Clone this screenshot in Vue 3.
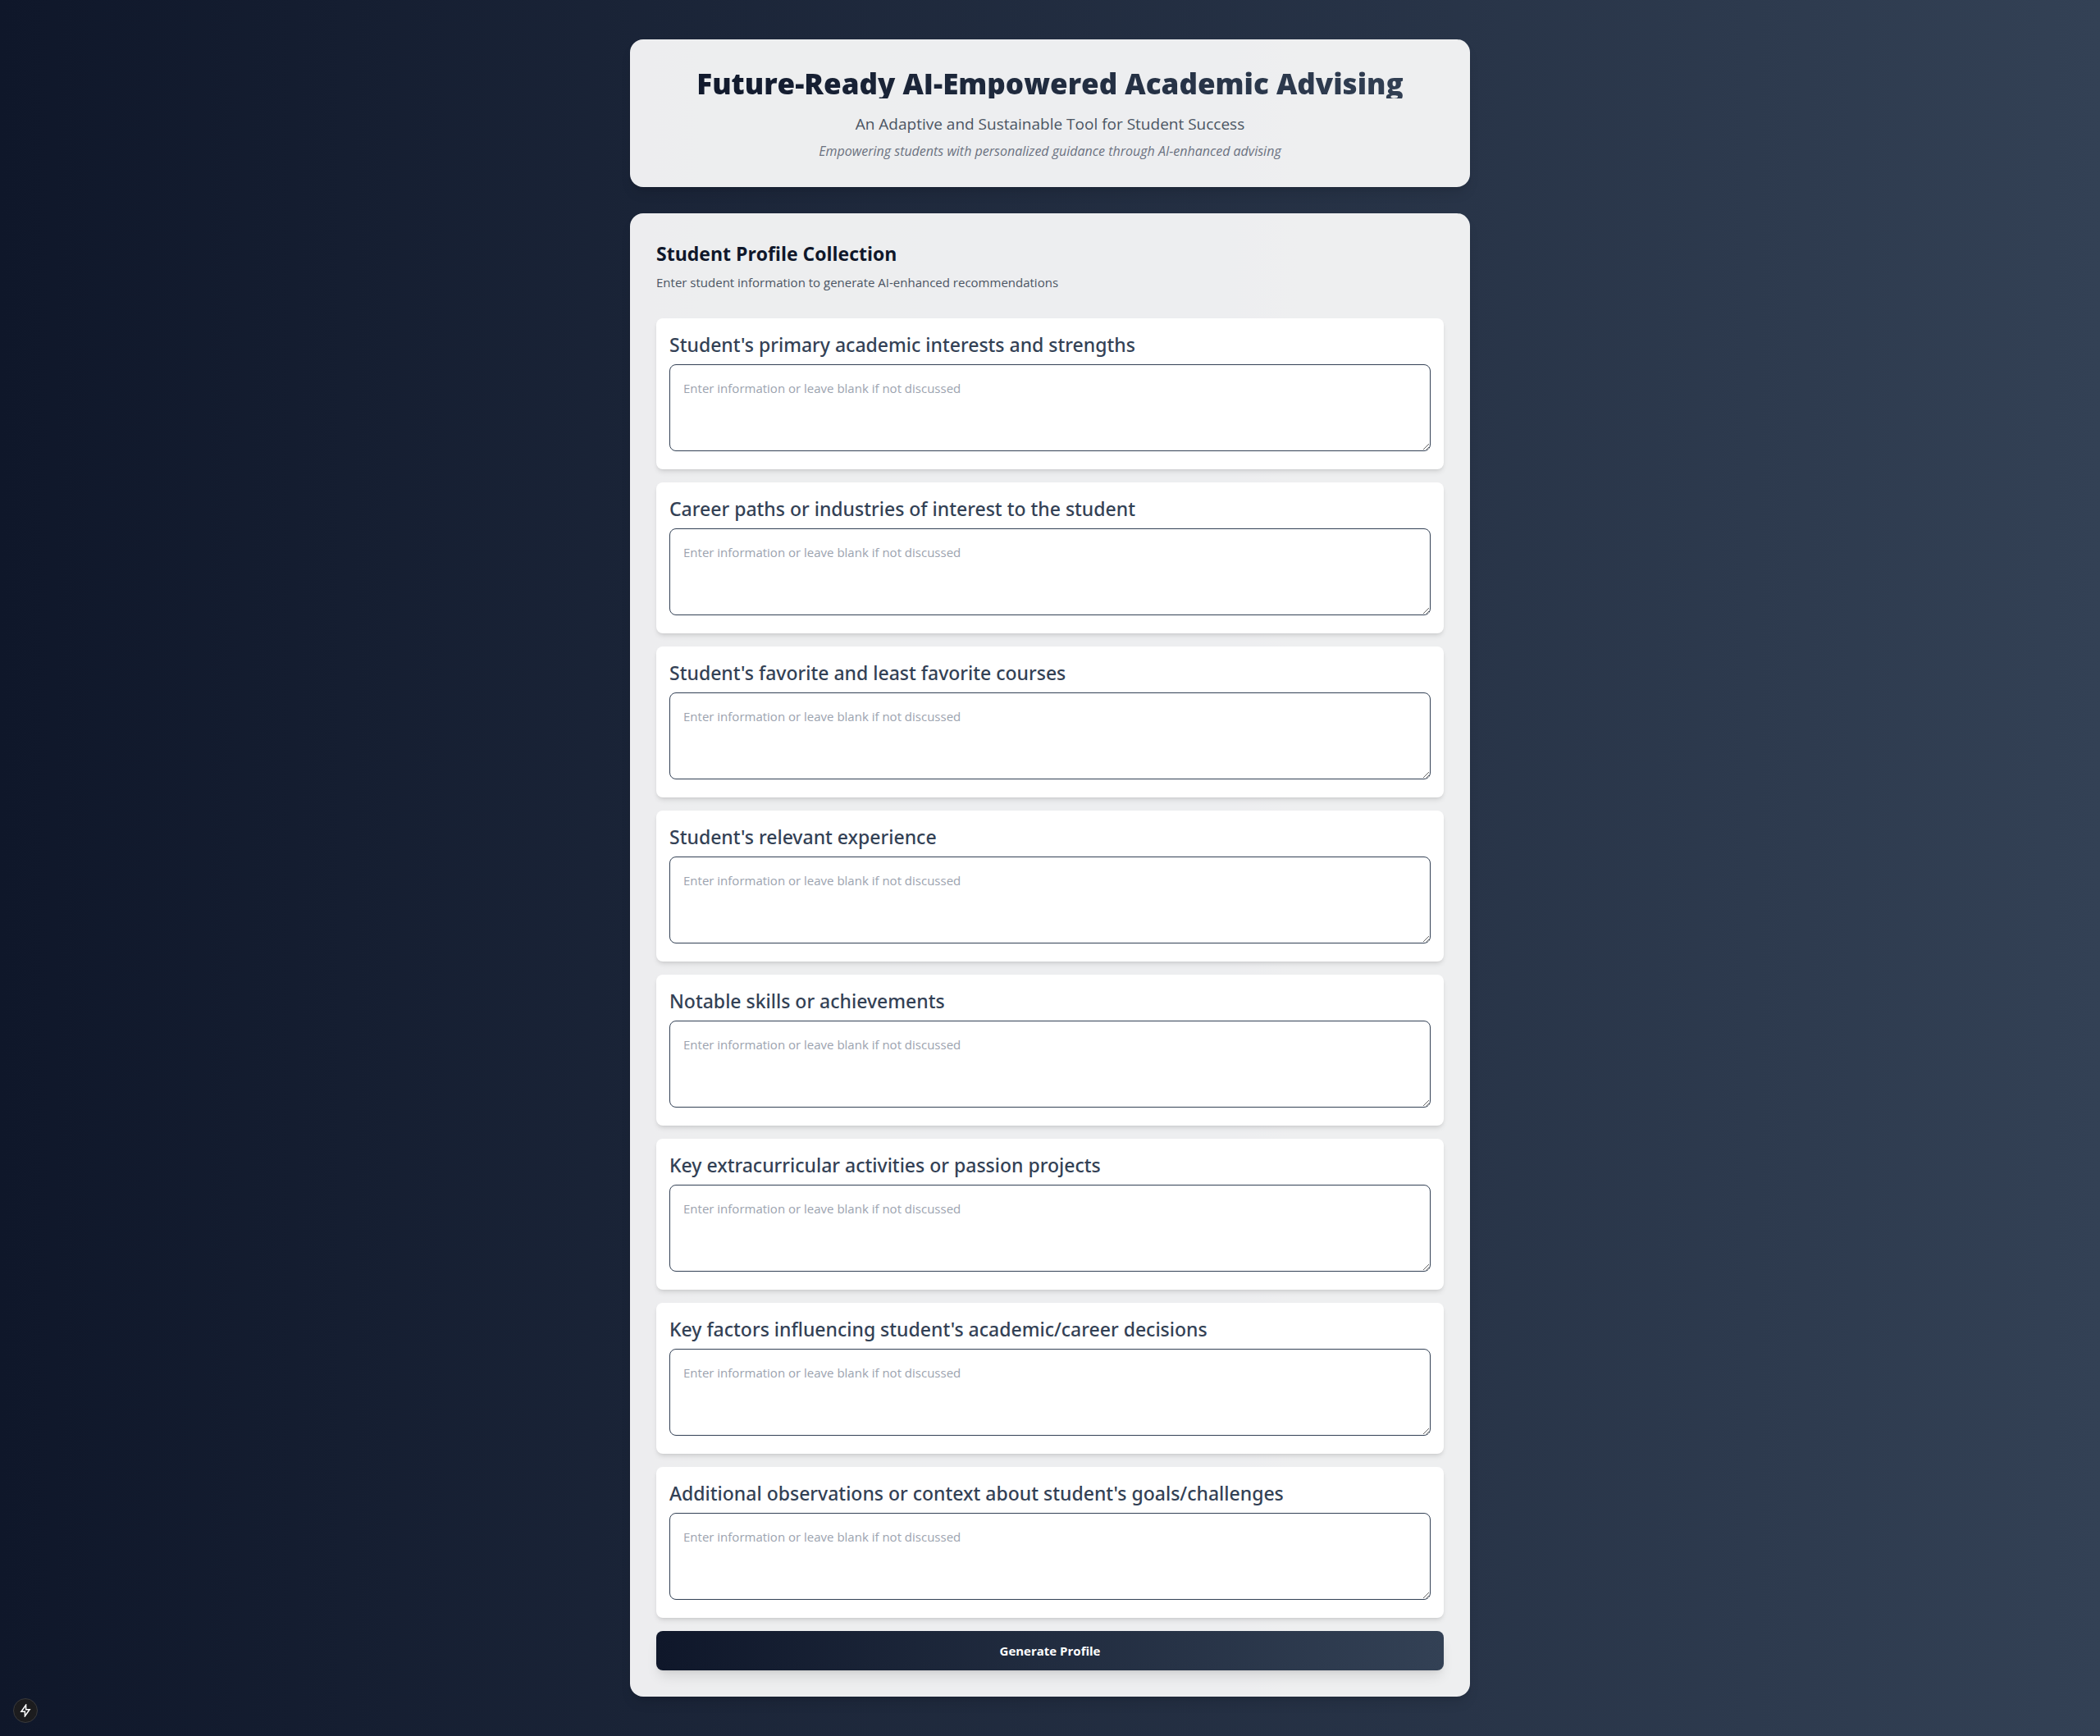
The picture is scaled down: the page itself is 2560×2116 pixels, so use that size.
<script setup>
import { ref } from 'vue'

const placeholder = 'Enter information or leave blank if not discussed'

const fields = ref([
  { id: 'interests', label: "Student's primary academic interests and strengths", value: '' },
  { id: 'career', label: 'Career paths or industries of interest to the student', value: '' },
  { id: 'courses', label: "Student's favorite and least favorite courses", value: '' },
  { id: 'experience', label: "Student's relevant experience", value: '' },
  { id: 'skills', label: 'Notable skills or achievements', value: '' },
  { id: 'extracurricular', label: 'Key extracurricular activities or passion projects', value: '' },
  { id: 'factors', label: "Key factors influencing student's academic/career decisions", value: '' },
  { id: 'context', label: "Additional observations or context about student's goals/challenges", value: '' },
])
</script>

<template>
  <div class="page">
    <main class="content">
      <header class="panel hero">
        <h1>Future-Ready AI-Empowered Academic Advising</h1>
        <p class="subtitle">An Adaptive and Sustainable Tool for Student Success</p>
        <p class="tagline">Empowering students with personalized guidance through AI-enhanced advising</p>
      </header>

      <section class="panel">
        <div class="intro">
          <h2>Student Profile Collection</h2>
          <p>Enter student information to generate AI-enhanced recommendations</p>
        </div>

        <form class="form" @submit.prevent>
          <div v-for="field in fields" :key="field.id" class="field">
            <label :for="field.id">{{ field.label }}</label>
            <textarea :id="field.id" v-model="field.value" rows="3" :placeholder="placeholder"></textarea>
          </div>
          <button type="submit" class="submit">Generate Profile</button>
        </form>
      </section>
    </main>

    <button type="button" class="indicator" aria-label="Static route">
      <svg width="16" height="16" viewBox="0 0 16 16" fill="none" stroke="#fff" stroke-width="1.5" stroke-linejoin="miter">
        <path d="M8.6 1.2 2.9 9.2H7.4V14.8L13.1 6.8H8.6Z" />
      </svg>
    </button>
  </div>
</template>

<style>
body {
  margin: 0;
}
</style>

<style scoped>
.page {
  min-height: 100vh;
  box-sizing: border-box;
  padding: 48px;
  background: linear-gradient(to right, #0f172a, #334155);
  font-family: "Open Sans", "Noto Sans", sans-serif;
  font-size: 15px;
  line-height: 24px;
}

.content {
  display: flex;
  flex-direction: column;
  gap: 32px;
  max-width: 1024px;
  margin: 0 auto;
}

.panel {
  padding: 32px;
  border-radius: 16px;
  background: rgba(255, 255, 255, 0.92);
  box-shadow: 0 10px 15px -3px rgba(0, 0, 0, 0.1), 0 4px 6px -4px rgba(0, 0, 0, 0.1);
}

.hero {
  text-align: center;
}

h1,
h2,
p {
  margin: 0;
}

h1 {
  height: 40px;
  font-size: 35px;
  line-height: 44px;
  font-weight: 800;
  color: transparent;
  background: linear-gradient(to right, #0f172a, #334155);
  background-clip: text;
  -webkit-background-clip: text;
}

.subtitle {
  margin-top: 16px;
  font-size: 19px;
  line-height: 30px;
  color: #4b5563;
}

.tagline {
  margin-top: 6px;
  font-size: 16px;
  font-style: italic;
  color: #6b7280;
}

.intro {
  margin-bottom: 32px;
}

h2 {
  margin-bottom: 6px;
  font-size: 23px;
  line-height: 34px;
  font-weight: 700;
  color: #0f172a;
}

.intro p {
  color: #4b5563;
}

.form {
  display: flex;
  flex-direction: column;
  gap: 16px;
}

.field {
  display: flex;
  flex-direction: column;
  gap: 8px;
  padding: 16px 16px 22px;
  border-radius: 8px;
  background: #fff;
  box-shadow: 0 4px 6px -1px rgba(0, 0, 0, 0.1), 0 2px 4px -2px rgba(0, 0, 0, 0.1);
}

label {
  font-family: "Noto Sans", "Open Sans", sans-serif;
  font-size: 23px;
  line-height: 32px;
  font-weight: 500;
  color: #334155;
}

textarea {
  display: block;
  box-sizing: border-box;
  width: 100%;
  padding: 16px;
  border: 1px solid #334155;
  border-radius: 8px;
  background: #fff;
  color: #0f172a;
  font: inherit;
  resize: vertical;
}

textarea::placeholder {
  color: #9ca3af;
}

.submit {
  padding: 12px 24px;
  border: 0;
  border-radius: 8px;
  background: linear-gradient(to right, #0f172a, #334155);
  box-shadow: 0 10px 15px -3px rgba(0, 0, 0, 0.1), 0 4px 6px -4px rgba(0, 0, 0, 0.1);
  color: #fff;
  font: inherit;
  font-weight: 700;
}

.indicator {
  position: fixed;
  left: 16px;
  bottom: 16px;
  display: flex;
  align-items: center;
  justify-content: center;
  width: 30px;
  height: 30px;
  padding: 0;
  border: 1px solid #3a3a3c;
  border-radius: 50%;
  background: #1c1c1e;
}
</style>
